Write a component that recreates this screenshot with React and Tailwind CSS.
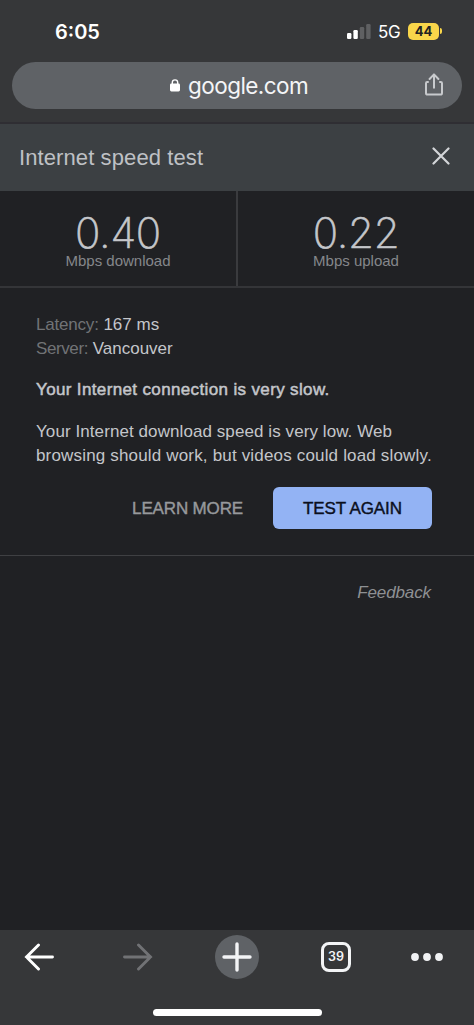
import React from 'react';

const stats = [
    { value: '0.40', label: 'Mbps download' },
    { value: '0.22', label: 'Mbps upload' },
];

function StatusBar() {
    return (
        <div className="h-[62px] flex items-center justify-between pl-[55px] pr-8 text-white font-['Inter',sans-serif]">
            <span className="pt-0.5 text-[20px] leading-6 font-semibold">6:05</span>
            <div className="flex items-center">
                <svg width="24" height="16" viewBox="0 0 24 16" className="mr-[7px]">
                    <rect x="0" y="10" width="4.4" height="6" rx="1.2" fill="#fff" />
                    <rect x="6.4" y="7" width="4.4" height="9" rx="1.2" fill="#fff" />
                    <rect x="12.8" y="4" width="4.4" height="12" rx="1.2" fill="#5f6062" />
                    <rect x="19.2" y="1" width="4.4" height="15" rx="1.2" fill="#5f6062" />
                </svg>
                <span className="w-[22px] mr-2 pt-0.5 text-[17px] leading-5 tracking-[-0.3px]">5G</span>
                <span className="w-[31px] h-[17px] rounded-[5px] bg-[#f9d64a] text-[#222] text-[13px] leading-[17px] font-bold text-center">44</span>
                <span className="w-0.5 h-1.5 ml-px rounded-r-full bg-[#f9d64a]"></span>
            </div>
        </div>
    );
}

function AddressBar() {
    return (
        <div className="h-[47px] mx-3 rounded-full bg-[#5f6266] flex items-center justify-between pl-[158px] pr-[19px]">
            <div className="flex items-center">
                <svg width="10" height="13" viewBox="0 0 10 13" className="mr-2">
                    <rect x="0" y="4.6" width="10" height="7.8" rx="1.4" fill="#fff" />
                    <path d="M2.3 5V3.6a2.7 2.7 0 0 1 5.4 0V5" fill="none" stroke="#fff" strokeWidth="1.4" />
                </svg>
                <span className="text-[22.5px] leading-7 tracking-[-0.55px] text-[#f4f5f7] font-['Inter',sans-serif]">google.com</span>
            </div>
            <svg width="18" height="23" viewBox="0 0 18 23" className="-mt-0.5" fill="none" stroke="#c8cacd" strokeWidth="2" strokeLinecap="round" strokeLinejoin="round">
                <path d="M3 9H2.2Q1 9 1 10.2V20Q1 21.6 2.6 21.6H15.4Q17 21.6 17 20V10.2Q17 9 15.8 9H15" />
                <path d="M9 14.8V1.8M4.6 6L9 1.4L13.4 6" />
            </svg>
        </div>
    );
}

function SpeedTest() {
    return (
        <main className="flex-1 text-[#c4c6ca]">
            <div className="h-[67px] bg-[#3c4043] flex items-center justify-between pl-[19px] pr-6">
                <h1 className="text-[22px] leading-6 tracking-[0.1px] text-[#bfc1c5]">Internet speed test</h1>
                <svg width="18" height="18" viewBox="0 0 18 18" className="mb-1" fill="none" stroke="#d3d5d8" strokeWidth="2.2" strokeLinecap="round">
                    <path d="M1.5 1.5L16.5 16.5M16.5 1.5L1.5 16.5" />
                </svg>
            </div>

            <div className="h-[97px] grid grid-cols-[238px_1fr] divide-x-2 divide-[#3a3b3e] border-b-2 border-[#343538] text-center">
                {stats.map((stat) => (
                    <div key={stat.label} className="pt-[22px]">
                        <p className="text-[42px] leading-10 tracking-[-0.3px] font-extralight [-webkit-text-stroke:0.6px] font-['Inter',sans-serif]">{stat.value}</p>
                        <p className="text-[15px] leading-4 text-[#85878b]">{stat.label}</p>
                    </div>
                ))}
            </div>

            <div className="h-[268px] pl-9 pr-[42px] pt-[25px] border-b border-[#3f4043] text-[17px] leading-6 tracking-[0.17px]">
                <p className="tracking-normal"><span className="text-[#717376] tracking-[-0.2px]">Latency:</span> 167 ms</p>
                <p className="tracking-normal"><span className="text-[#717376] tracking-[-0.4px]">Server:</span> Vancouver</p>
                <p className="mt-[17px] tracking-[0.36px] [-webkit-text-stroke:0.5px]">Your Internet connection is very slow.</p>
                <p className="mt-[18px] whitespace-nowrap">
                    <span className="tracking-[0.08px]">Your Internet download speed is very low. Web</span><br />
                    browsing should work, but videos could load slowly.
                </p>
                <div className="mt-[19px] flex items-center justify-end gap-[30px]">
                    <button className="pt-0.5 tracking-[-0.15px] text-[#97999c] [-webkit-text-stroke:0.4px]">LEARN MORE</button>
                    <button className="w-[159px] h-[42px] pt-0.5 rounded-md bg-[#93b3f4] tracking-[-0.1px] text-[#0b0f1d] [-webkit-text-stroke:0.4px]">TEST AGAIN</button>
                </div>
            </div>

            <p className="pt-[25px] pr-[43px] text-right text-[17px] leading-6 tracking-[-0.1px] italic text-[#8e9093]">Feedback</p>
        </main>
    );
}

function BottomBar() {
    return (
        <footer className="h-[95px] bg-[#363739]">
            <div className="h-[54px] flex items-center pl-6">
                <svg width="30" height="28" viewBox="0 0 30 28" fill="none" stroke="#fff" strokeWidth="2.9" strokeLinecap="round" strokeLinejoin="miter">
                    <path d="M28.5 14H2.5M14.5 2L2.5 14L14.5 26" />
                </svg>
                <svg width="30" height="28" viewBox="0 0 30 28" className="ml-[69px]" fill="none" stroke="#717275" strokeWidth="2.9" strokeLinecap="round" strokeLinejoin="miter">
                    <path d="M1.5 14H27.5M15.5 2L27.5 14L15.5 26" />
                </svg>
                <svg width="44" height="44" viewBox="0 0 44 44" className="ml-[62px]">
                    <circle cx="22" cy="22" r="22" fill="#5f6266" />
                    <path d="M22 9V35M9 22H35" stroke="#f3f4f6" strokeWidth="3.4" strokeLinecap="round" />
                </svg>
                <span className="w-[30px] h-[30px] ml-[62px] pt-px rounded-[8px] border-[3px] border-[#f3f4f6] flex items-center justify-center text-[12.5px] leading-none font-semibold text-[#f3f4f6] font-['Inter',sans-serif]">39</span>
                <svg width="32" height="8" viewBox="0 0 32 8" className="ml-[59.5px]" fill="#f1f2f4">
                    <circle cx="4" cy="4" r="3.9" />
                    <circle cx="16" cy="4" r="3.9" />
                    <circle cx="28" cy="4" r="3.9" />
                </svg>
            </div>
            <div className="w-[169px] h-[7px] mt-[25px] mx-auto rounded-full bg-white"></div>
        </footer>
    );
}

export default function App() {
    return (
        <div className="w-[474px] h-[1025px] flex flex-col overflow-hidden bg-[#202124] font-['Liberation_Sans',Arial,sans-serif]">
            <header className="h-[124px] bg-[#363739] border-b-2 border-[#2f2e33]">
                <StatusBar />
                <AddressBar />
            </header>
            <SpeedTest />
            <BottomBar />
        </div>
    );
}
